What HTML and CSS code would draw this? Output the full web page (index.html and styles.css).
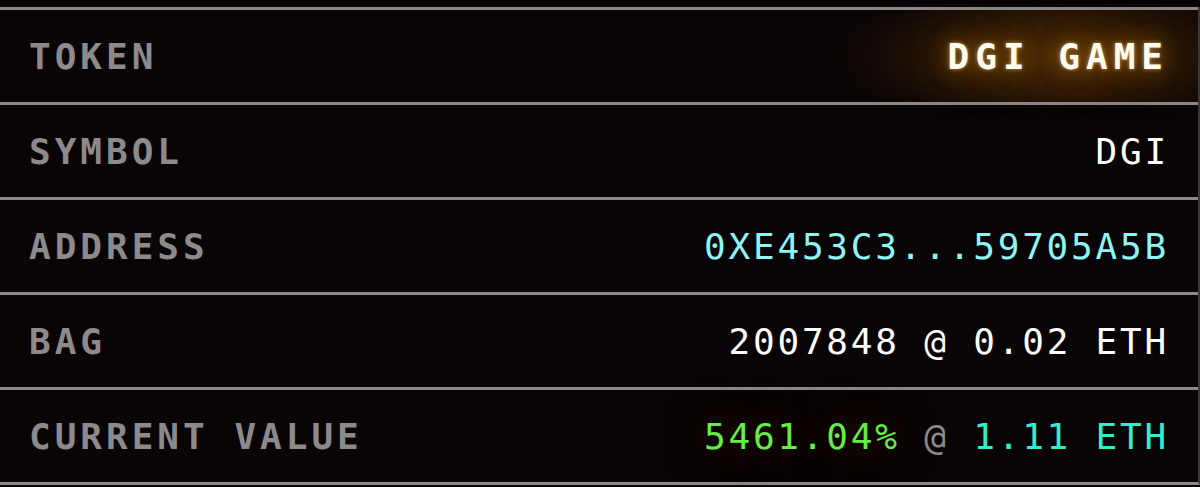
FILE: index.html
```html
<!DOCTYPE html>
<html lang="en">
<head>
  <meta charset="UTF-8" />
  <meta name="viewport" content="width=device-width, initial-scale=1.0" />
  <title>DGI Token</title>
  <link rel="stylesheet" href="styles.css">
</head>
<body>
  <div class="panel">
    <div class="row">
      <span class="label">TOKEN</span>
      <span class="value glow">DGI GAME</span>
    </div>
    <div class="row">
      <span class="label">SYMBOL</span>
      <span class="value">DGI</span>
    </div>
    <div class="row">
      <span class="label">ADDRESS</span>
      <span class="value address">0XE453C3...59705A5B</span>
    </div>
    <div class="row">
      <span class="label">BAG</span>
      <span class="value">2007848 @ 0.02 ETH</span>
    </div>
    <div class="row">
      <span class="label">CURRENT VALUE</span>
      <span class="value"><span class="gain">5461.04%</span> <span class="at">@</span> <span class="eth">1.11 ETH</span></span>
    </div>
  </div>
</body>
</html>
```

FILE: styles.css
```css
body {
  margin: 0;
  background-color: #070304;
  font-family: 'DejaVu Sans Mono', 'Liberation Mono', monospace;
  overflow: hidden;
}
.panel {
  margin-top: 7px;
  width: 1198px;
  border-right: 2px solid #3a3838;
  border-bottom: 3px solid #8a8888;
  background-color: #090405;
}
.row {
  display: flex;
  justify-content: space-between;
  align-items: center;
  height: 92px;
  border-top: 3px solid #8a8888;
  padding: 0 29px 0 29px;
  font-size: 36px;
  letter-spacing: 2.8px;
}
.row:first-child {
  background: radial-gradient(ellipse 230px 85px at 1058px 50%, #4a2b08 0%, #2c1906 45%, #120906 80%, #090405 100%);
}
.label {
  color: #8c8a8a;
  font-weight: bold;
  letter-spacing: 4px;
}
.value {
  color: #ffffff;
}
.glow {
  color: #fffbee;
  font-weight: bold;
  letter-spacing: 6px;
  text-shadow: 0 0 4px rgba(255, 215, 140, 0.6), 0 0 20px rgba(230, 150, 40, 0.5), 0 0 45px rgba(190, 110, 20, 0.5);
}
.address {
  color: #8ff4f4;
}
.gain {
  color: #66ee44;
  text-shadow: 0 0 40px rgba(140, 80, 20, 0.6);
}
.at {
  color: #8c8a8a;
}
.eth {
  color: #33eecc;
}
```
